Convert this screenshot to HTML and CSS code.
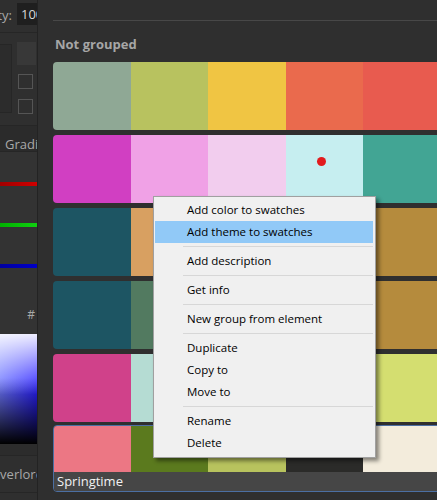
FILE: index.html
```html
<!DOCTYPE html>
<html>
<head>
<meta charset="utf-8">
<link rel="stylesheet" href="styles.css">
</head>
<body>
<div class="app">
  <div class="left">
    <div class="lp-top">
      <span class="lp-label">Opacity:</span>
      <span class="lp-input">100</span>
    </div>
    <div class="lp-sec1">
      <div class="lp-box"></div>
      <div class="lp-col">
        <div class="lp-square"></div>
        <div class="lp-check"></div>
        <div class="lp-check"></div>
      </div>
    </div>
    <div class="lp-tabs"><span class="lp-tab">Gradients</span></div>
    <div class="lp-sec2">
      <div class="slider red"></div>
      <div class="slider green"></div>
      <div class="slider blue"></div>
      <div class="hash">#</div>
      <div class="picker"></div>
      <div class="picker-foot"></div>
    </div>
    <div class="lp-bottom"><span class="lp-name">Overlord</span></div>
  </div>
  <div class="main">
    <div class="topline"></div>
    <div class="heading">Not grouped</div>
    <div class="row">
      <div class="sw" style="background:#8fa895"></div>
      <div class="sw" style="background:#b8c25f"></div>
      <div class="sw" style="background:#f0c543"></div>
      <div class="sw" style="background:#ea6a4d"></div>
      <div class="sw" style="background:#e85b4f"></div>
    </div>
    <div class="row">
      <div class="sw" style="background:#d13fc2"></div>
      <div class="sw" style="background:#f0a1e6"></div>
      <div class="sw" style="background:#f2cdee"></div>
      <div class="sw dotted" style="background:#c6eef0"><span class="dot"></span></div>
      <div class="sw" style="background:#42a594"></div>
    </div>
    <div class="row">
      <div class="sw" style="background:#1d5563"></div>
      <div class="sw" style="background:#d8a061"></div>
      <div class="sw" style="background:#c9a050"></div>
      <div class="sw" style="background:#bf9446"></div>
      <div class="sw" style="background:#b58b3d"></div>
    </div>
    <div class="row">
      <div class="sw" style="background:#1d5563"></div>
      <div class="sw" style="background:#527a60"></div>
      <div class="sw" style="background:#8f8a50"></div>
      <div class="sw" style="background:#a88a45"></div>
      <div class="sw" style="background:#b58b3d"></div>
    </div>
    <div class="row">
      <div class="sw" style="background:#d0418a"></div>
      <div class="sw" style="background:#b5dcd3"></div>
      <div class="sw" style="background:#e8e0b0"></div>
      <div class="sw" style="background:#dde08a"></div>
      <div class="sw" style="background:#d4de70"></div>
    </div>
    <div class="row selected">
      <div class="row-colors">
        <div class="sw" style="background:#ec7784"></div>
        <div class="sw" style="background:#5b7a1e"></div>
        <div class="sw" style="background:#b8c35e"></div>
        <div class="sw" style="background:#2b2b29"></div>
        <div class="sw" style="background:#f3ecdc"></div>
      </div>
      <div class="row-label">Springtime</div>
    </div>
  </div>
</div>
<div class="menu">
  <div class="mi">Add color to swatches</div>
  <div class="mi hl">Add theme to swatches</div>
  <div class="sep"></div>
  <div class="mi">Add description</div>
  <div class="sep"></div>
  <div class="mi">Get info</div>
  <div class="sep"></div>
  <div class="mi">New group from element</div>
  <div class="sep"></div>
  <div class="mi">Duplicate</div>
  <div class="mi">Copy to</div>
  <div class="mi">Move to</div>
  <div class="sep"></div>
  <div class="mi">Rename</div>
  <div class="mi">Delete</div>
</div>
</body>
</html>
```

FILE: styles.css
```css
html, body {
  margin: 0;
  padding: 0;
  background: #2f2f2f;
}
body {
  width: 437px;
  height: 500px;
  overflow: hidden;
  position: relative;
  font-family: "Open Sans", "Noto Sans", sans-serif;
}
.app {
  display: flex;
  width: 437px;
  height: 500px;
  overflow: hidden;
}
.left {
  width: 37px;
  flex-shrink: 0;
  background: #2f2f2f;
  border-right: 1px solid #232323;
  display: flex;
  flex-direction: column;
  overflow: hidden;
}
.lp-top {
  height: 32px;
  border-bottom: 1px solid #262626;
  display: flex;
  justify-content: flex-end;
  align-items: flex-start;
  flex-shrink: 0;
}
.lp-label {
  color: #a8a8a8;
  font-size: 13px;
  line-height: 18px;
  margin-top: 6px;
  margin-right: 5px;
  white-space: nowrap;
}
.lp-input {
  width: 20px;
  height: 22px;
  margin-top: 3px;
  background: #1f1f1f;
  color: #d8d8d8;
  font-size: 13px;
  line-height: 22px;
  padding-left: 4px;
  box-sizing: border-box;
  overflow: hidden;
  white-space: nowrap;
  flex-shrink: 0;
}
.lp-sec1 {
  height: 92px;
  display: flex;
  border-bottom: 1px solid #262626;
  flex-shrink: 0;
}
.lp-box {
  width: 12px;
  height: 69px;
  margin-top: 11px;
  border: 1px solid #262626;
  border-left: none;
  background: #2c2c2c;
  box-sizing: border-box;
}
.lp-col {
  margin-left: 5px;
  display: flex;
  flex-direction: column;
}
.lp-square {
  width: 19px;
  height: 23px;
  margin-top: 9px;
  background: #383838;
}
.lp-check {
  width: 15px;
  height: 15px;
  margin-left: 1px;
  margin-top: 9px;
  border: 1px solid #555;
  box-sizing: border-box;
}
.lp-check + .lp-check {
  margin-top: 10px;
}
.lp-tabs {
  height: 25px;
  background: #2b2b2b;
  border-bottom: 1px solid #262626;
  flex-shrink: 0;
  overflow: hidden;
}
.lp-tab {
  display: block;
  color: #a8a8a8;
  font-size: 13px;
  line-height: 18px;
  margin-top: 9px;
  margin-left: 5px;
  white-space: nowrap;
}
.lp-sec2 {
  background: #333;
  height: 304px;
  display: flex;
  flex-direction: column;
  flex-shrink: 0;
}
.slider {
  height: 4px;
  flex-shrink: 0;
}
.slider.red {
  margin-top: 30px;
  background: linear-gradient(to right, #a00000, #d00000);
}
.slider.green {
  margin-top: 37px;
  background: linear-gradient(to right, #00b000, #10d010);
}
.slider.blue {
  margin-top: 37px;
  background: linear-gradient(to right, #0000a0, #0000c8);
}
.hash {
  color: #a8a8a8;
  font-size: 12px;
  line-height: 14px;
  margin-top: 40px;
  text-align: right;
  padding-right: 2px;
}
.picker {
  margin-top: 12px;
  height: 110px;
  flex-shrink: 0;
  background:
    linear-gradient(to bottom, rgba(0,0,0,0) 0%, rgba(0,0,0,0) 40%, #000 100%),
    linear-gradient(to right, #6f78ff 0%, #2a20ff 100%);
  position: relative;
}
.picker::before {
  content: "";
  position: absolute;
  inset: 0;
  background: linear-gradient(to bottom, rgba(255,255,255,0.92) 0%, rgba(255,255,255,0) 55%);
}
.picker-foot {
  height: 13px;
  background: #2c2c2c;
  border-bottom: 1px solid #262626;
}
.lp-bottom {
  height: 36px;
  border-bottom: 1px solid #262626;
  display: flex;
  justify-content: flex-start;
  align-items: center;
  overflow: hidden;
  flex-shrink: 0;
}
.lp-name {
  color: #a8a8a8;
  font-size: 13px;
  white-space: nowrap;
  margin-left: -10px;
}
.main {
  flex: 1;
  min-width: 0;
  background: #2f2f2f;
  padding-left: 15px;
  overflow: hidden;
}
.topline {
  height: 20px;
  border-bottom: 1px solid #484848;
}
.heading {
  color: #a6a6a6;
  font-weight: 700;
  font-size: 13px;
  line-height: 18px;
  padding-top: 14px;
  padding-left: 2px;
  margin-bottom: 9px;
  white-space: nowrap;
}
.row {
  width: 388px;
  height: 68px;
  margin-bottom: 5px;
  border-radius: 4px;
  overflow: hidden;
  display: flex;
}
.sw {
  flex: 1;
  position: relative;
}
.dot {
  position: absolute;
  width: 9px;
  height: 9px;
  border-radius: 50%;
  background: #e21b1d;
  left: 31px;
  top: 22px;
}
.row.selected {
  margin-top: -2px;
  height: 67px;
  border: 1px solid #4b6fa3;
  box-sizing: border-box;
  flex-direction: column;
}
.row-colors {
  flex: 1;
  display: flex;
}
.row-label {
  height: 19px;
  background: #464646;
  color: #f2f2f2;
  font-size: 13px;
  line-height: 19px;
  padding-left: 3px;
}
.menu {
  position: absolute;
  left: 153px;
  top: 196px;
  width: 223px;
  box-sizing: border-box;
  background: #f0f0f0;
  border: 1px solid #a0a0a0;
  padding: 2px 2px 3px 1px;
  box-shadow: 3px 3px 4px rgba(0,0,0,0.45);
  font-family: "Open Sans", "Noto Sans", sans-serif;
  font-size: 11.5px;
  color: #000;
}
.mi {
  height: 22px;
  line-height: 22px;
  padding-left: 32px;
  white-space: nowrap;
}
.mi.hl {
  background: #91c9f7;
}
.sep {
  height: 7px;
  position: relative;
}
.sep::after {
  content: "";
  position: absolute;
  left: 28px;
  right: 0;
  top: 3px;
  height: 1px;
  background: #d7d7d7;
}
```
